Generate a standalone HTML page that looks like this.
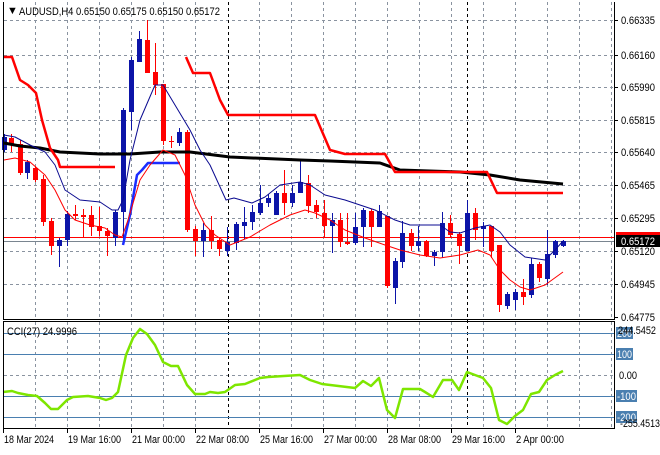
<!DOCTYPE html>
<html><head><meta charset="utf-8"><style>
html,body{margin:0;padding:0;background:#fff;}
body{width:660px;height:450px;overflow:hidden;font-family:"Liberation Sans",sans-serif;}
svg text{font-family:"Liberation Sans",sans-serif;font-size:11px;}
</style></head><body>
<svg id="s" width="660" height="450" xmlns="http://www.w3.org/2000/svg">
<rect width="660" height="450" fill="#fff"/>
<g id="grid" stroke="#8a93a0" stroke-dasharray="3,3" stroke-width="1"></g>
<g id="cc"></g>
<g id="ln" fill="none"></g>
<line x1="3.5" y1="2" x2="3.5" y2="319" stroke="#000"/>
<line x1="614.5" y1="2" x2="614.5" y2="319" stroke="#000"/>
<line x1="3" y1="319.5" x2="615" y2="319.5" stroke="#000"/>
<rect x="3.5" y="321.5" width="611" height="107" fill="none" stroke="#000"/>
<text x="7" y="14" fill="#000" font-size="9">▼</text>
<text x="19" y="15" fill="#000" textLength="201" lengthAdjust="spacingAndGlyphs">AUDUSD,H4  0.65150 0.65175 0.65150 0.65172</text>
<text x="7" y="335" fill="#000" textLength="70" lengthAdjust="spacingAndGlyphs">CCI(27) 24.9996</text>
<g id="lab" fill="#000"></g>
</svg>
<script>
var NS="http://www.w3.org/2000/svg";
function el(p,t,a,txt){var e=document.createElementNS(NS,t);for(var k in a)e.setAttribute(k,a[k]);if(txt!=null)e.textContent=txt;document.getElementById(p).appendChild(e);return e;}
for(var x=3;x<614;x+=32){ if(x==227) continue; el('grid','line',{x1:x+.5,y1:2,x2:x+.5,y2:319});el('grid','line',{x1:x+.5,y1:322,x2:x+.5,y2:428});}
[20,55,87,120,152,185,218,251,284].forEach(function(y){el('grid','line',{x1:4,y1:y+.5,x2:614,y2:y+.5});});
el('grid','line',{x1:4,y1:375.5,x2:614,y2:375.5});
[228,467].forEach(function(x){el('grid','line',{x1:x+.5,y1:2,x2:x+.5,y2:428,stroke:'#000'});});
[333,354,396,417].forEach(function(y){el('grid','line',{x1:4,y1:y+.5,x2:614,y2:y+.5,stroke:'#4a7fb0','stroke-dasharray':'none'});});
el('grid','line',{x1:4,y1:237.5,x2:614,y2:237.5,stroke:'#ff0000','stroke-dasharray':'none'});
el('grid','line',{x1:4,y1:241.5,x2:614,y2:241.5,stroke:'#7a8590','stroke-dasharray':'none'});
var B='#0c14a8',R='#ff0000';
var C=[[4,137,150,134,152,B],[11,138,144,134,152,R],[20,144,173,140,175,R],[27,162,173,160,179,B],[35,168,180,166,182,R],[43,179,222,175,226,R],[51,221,246,218,255,R],[59,240,246,238,267,B],[67,214,240,211,246,B],[75,214,216,205,220,R],[83,215,217,209,238,R],[91,215,227,206,236,R],[99,226,231,207,236,R],[107,231,236,228,256,R],[115,212,238,210,246,B],[123,110,212,108,245,B],[131,60,112,57,130,B],[139,39,62,31,62,B],[147,40,73,20,73,R],[155,72,85,43,95,R],[163,84,141,84,145,R],[171,141,142,136,148,R],[179,132,143,128,146,B],[187,132,230,130,232,R],[195,229,241,226,256,R],[203,230,241,223,257,B],[211,230,241,216,249,R],[219,240,249,238,256,R],[227,242,251,227,256,B],[236,224,243,222,250,B],[244,222,226,207,239,B],[252,212,222,205,230,B],[260,203,213,185,215,B],[268,198,203,194,207,B],[276,193,215,191,215,B],[284,193,203,170,215,R],[292,193,203,185,207,B],[300,182,193,160,193,B],[308,183,206,175,213,R],[316,205,212,200,218,R],[324,213,226,200,237,R],[332,220,226,213,253,B],[340,220,242,213,247,R],[347,242,244,213,245,R],[355,227,243,213,245,B],[363,210,227,208,247,B],[371,211,227,209,247,R],[379,211,227,205,227,B],[387,216,286,216,288,R],[395,261,288,258,304,B],[402,233,262,221,268,B],[411,233,246,229,251,R],[418,241,246,226,251,B],[426,241,256,240,257,R],[434,252,256,250,266,B],[442,223,252,212,258,B],[450,223,235,215,238,R],[459,234,246,232,264,R],[467,213,251,200,251,B],[475,213,230,208,240,R],[483,226,229,222,247,B],[491,226,251,226,258,R],[499,245,305,245,312,R],[507,294,306,292,309,B],[515,292,300,289,310,B],[523,292,297,279,305,R],[531,264,295,258,298,B],[539,264,278,262,282,R],[547,254,279,230,285,B],[555,241,255,240,258,B],[563,241,246,240,247,B]];
C.forEach(function(c){el('cc','line',{x1:c[0]+.5,y1:c[3],x2:c[0]+.5,y2:c[4],stroke:c[5]});el('cc','rect',{x:c[0]-2,y:c[1],width:5,height:Math.max(1,c[2]-c[1]),fill:c[5]});});
function pl(pts,st,w){el('ln','polyline',{points:pts,stroke:st,'stroke-width':w,'stroke-linejoin':'round'});}
pl("4,143 20,146 40,148 60,152 100,154 130,154 160,152 190,152 230,157 300,160 330,161 380,163 400,170 460,172 490,175 520,180 563,184","#000",3);
pl("4,57 12,57 20,80 28,85 36,93 42,120 50,148 58,160 60,167 115,167","#ff0000",2.5);
pl("186,57 193,73 210,73 220,100 228,115 315,115 330,150 345,154 385,154 395,172 487,172 497,193 563,193","#ff0000",2.5);
pl("123,245 130,215 137,175 142,170 148,163 180,163","#1a2cff",2.5);
pl("4,135 15,137 30,145 45,152 55,165 65,190 80,200 100,202 112,210 118,210 123,200 130,160 140,120 155,85 163,85 175,105 190,130 200,150 210,165 226,200 234,198 252,203 265,197 280,185 300,182 310,185 325,195 345,200 360,205 375,210 395,220 410,225 440,225 450,232 460,233 475,228 490,225 500,232 510,245 525,257 545,260 555,250 563,241","#0a0a90",1);
pl("4,160 15,158 30,162 45,175 55,190 65,210 75,220 90,225 105,228 115,235 122,237 128,220 140,180 150,165 163,150 175,155 185,175 195,205 205,225 215,235 230,245 250,237 270,225 290,215 305,210 315,213 330,220 345,230 365,238 385,245 400,250 420,255 440,258 460,255 478,250 490,255 500,270 510,280 520,287 530,290 545,285 563,272","#ff0000",1);
pl("3,392 12,391 18,393 28,395 37,396 45,403 51,409 58,409 67,400 73,397 88,396 100,398 106,400 112,398 118,392 126,355 133,338 140,329 147,334 155,345 163,362 171,366 178,366 187,385 195,394 205,394 210,392 218,393 225,392 235,385 245,384 260,378 268,377 300,375 310,380 322,384 355,388 363,381 371,386 379,378 387,410 395,418 403,389 420,389 425,392 433,397 443,380 452,380 459,390 467,372 483,378 491,388 499,420 507,424 515,416 523,410 531,394 539,392 547,380 555,375 563,371","#7ee600",2.5);
function T(p,a,s,w){a.textLength=w;a.lengthAdjust='spacingAndGlyphs';return el(p,'text',a,s);}
[["0.66335",20],["0.66160",55],["0.65990",87],["0.65815",120],["0.65640",152],["0.65465",185],["0.65295",218],["0.65120",251],["0.64945",284],["0.64775",317]].forEach(function(p){el('lab','line',{x1:614,y1:p[1]+.5,x2:618,y2:p[1]+.5,stroke:'#000'});T('lab',{x:621,y:p[1]+4},p[0],34);});
el('lab','rect',{x:616,y:232,width:44,height:10,fill:'#ff0000'});
el('lab','rect',{x:616,y:235,width:44,height:12,fill:'#000'});
T('lab',{x:621,y:245,fill:'#fff'},"0.65172",34);
[["200",333],["100",354],["-100",396],["-200",417]].forEach(function(p){var w=p[0].length>3?21:17;el('lab','rect',{x:616,y:p[1]-6,width:w,height:12,fill:'#4a7fb0'});T('lab',{x:617,y:p[1]+4,fill:'#fff'},p[0],w-2);});
T('lab',{x:619,y:379},"0.00",18);
T('lab',{x:618,y:334},"244.5452",38);
T('lab',{x:620,y:427},"-255.4513",40);
[["18 Mar 2024",3,50],["19 Mar 16:00",67,53],["21 Mar 00:00",131,53],["22 Mar 08:00",195,53],["25 Mar 16:00",259,53],["27 Mar 00:00",323,53],["28 Mar 08:00",387,53],["29 Mar 16:00",451,53],["2 Apr 00:00",515,48]].forEach(function(p){el('lab','line',{x1:p[1]+.5,y1:429,x2:p[1]+.5,y2:433,stroke:'#000'});T('lab',{x:p[1]+1,y:443},p[0],p[2]);});
</script>
</body></html>
